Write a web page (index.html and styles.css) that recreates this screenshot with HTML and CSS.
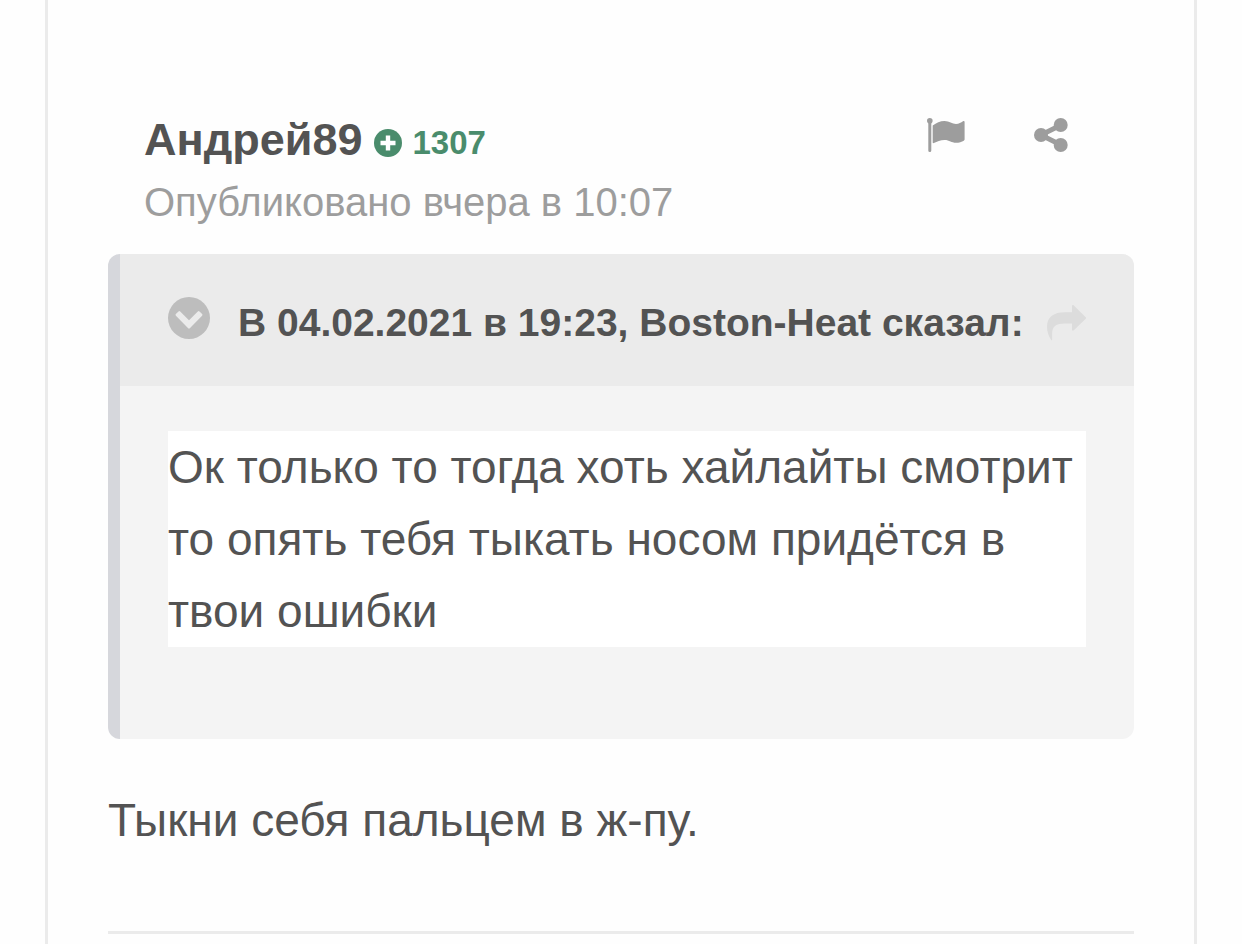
FILE: index.html
```html
<!DOCTYPE html>
<html lang="ru">
<head>
    <meta charset="UTF-8">
    <meta name="viewport" content="width=device-width, initial-scale=1.0">
    <title>Андрей89</title>
    <link rel="stylesheet" href="styles.css">
</head>
<body>
    <article class="post">
        <header class="post-header">
            <div class="post-author">
                <h3 class="author-line">
                    <a class="author-name" href="#">Андрей89</a>
                    <span class="reputation">
                        <svg class="icon-plus" viewBox="0 0 28 28" aria-hidden="true">
                            <circle cx="14" cy="14" r="14" fill="currentColor"/>
                            <path d="M14 6.500v15M6.500 14h15" stroke="#fff" stroke-width="4.400"/>
                        </svg>
                        1307
                    </span>
                </h3>
                <a class="post-date" href="#">Опубликовано вчера в 10:07</a>
            </div>
            <div class="post-tools">
                <button type="button" class="tool" aria-label="Пожаловаться">
                    <svg class="icon-flag" viewBox="0 0 38 34" aria-hidden="true">
                        <circle cx="2.800" cy="2.800" r="2.800"/>
                        <path d="M1.300 3h3v29.500a1.500 1.500 0 0 1-3 0z"/>
                        <path d="M5.700 7.500C9.500 5 13 3 17.500 3c5 0 7.500 3 11.500 3 3 0 5-1.600 7-2.700.900-.500 1.600-.200 1.600.700V21.300c0 .700-.200 1-.800 1.400-2 1.100-4.800 2.100-7.800 2.100-4.500 0-6.500-2.800-11.500-2.800-4 0-7.500 1.600-10.600 3.100-.700.400-1.200 0-1.200-.700z"/>
                    </svg>
                </button>
                <button type="button" class="tool" aria-label="Поделиться">
                    <svg class="icon-share" viewBox="0 0 34 34" aria-hidden="true">
                        <path d="M27 7L7 17l20 10" fill="none" stroke="currentColor" stroke-width="5"/>
                        <circle cx="7" cy="17" r="7"/>
                        <circle cx="26.700" cy="7" r="7"/>
                        <circle cx="26.700" cy="27" r="7"/>
                    </svg>
                </button>
            </div>
        </header>

        <blockquote class="quote">
            <div class="quote-header">
                <button type="button" class="quote-toggle" aria-label="Свернуть цитату">
                    <svg class="icon-toggle" viewBox="0 0 42 42" aria-hidden="true">
                        <circle cx="21" cy="21" r="21" fill="#bdbdbd"/>
                        <path d="M7.900 18.700a1.200 1.200 0 0 1 0-1.700l2.600-2.600a1.200 1.200 0 0 1 1.700 0L21 23.200l8.800-8.800a1.200 1.200 0 0 1 1.700 0l2.600 2.600a1.200 1.200 0 0 1 0 1.700L21.800 31.300a1.200 1.200 0 0 1-1.600 0z" fill="#ebebeb"/>
                    </svg>
                </button>
                <cite class="quote-title">В 04.02.2021 в 19:23, Boston-Heat сказал:</cite>
                <a class="quote-link" href="#" aria-label="Перейти к сообщению">
                    <svg class="icon-arrow" viewBox="0 0 39 36" aria-hidden="true">
                        <path d="M25 1.200c0-1.200 1-1.500 1.800-.700L38.500 12c.700.600.700 1.300 0 1.900L26.800 25.300c-.800.800-1.800.500-1.800-.700V18.500h-7C9 18.500 5.500 21.500 5.200 27.500c-.100 2.500-.100 4.500 0 7 0 1-.700 1.200-1.200.300C1.500 31 0 26 0 22 0 11.500 7 7.300 18 7.300h7z"/>
                    </svg>
                </a>
            </div>
            <div class="quote-body">
                <p class="quote-text">Ок только то тогда хоть хайлайты смотрит то опять тебя тыкать носом придётся в твои ошибки</p>
            </div>
        </blockquote>

        <p class="post-text">Тыкни себя пальцем в ж-пу.</p>

        <hr class="divider">
    </article>
</body>
</html>
```
FILE: styles.css
```css
* {
    margin: 0;
    padding: 0;
    box-sizing: border-box;
}

body {
    font-family: "Liberation Sans", Arial, sans-serif;
    font-size: 46px;
    line-height: 72px;
    color: #535353;
    background-color: #fefefe;
}

a {
    color: inherit;
    text-decoration: none;
}

button {
    display: flex;
    border: none;
    background: none;
    color: inherit;
    cursor: pointer;
}

svg {
    display: block;
}

/* Post */
.post {
    min-height: 100vh;
    margin: 0 45px;
    padding: 108px 60px 0;
    border: solid #ebebeb;
    border-width: 0 3px;
}

.post-header {
    display: flex;
    justify-content: space-between;
    padding: 0 66px 0 36px;
    margin-bottom: 20px;
}

.author-line {
    display: flex;
    align-items: center;
    gap: 12px;
    font-size: 45px;
    line-height: 63px;
}

.reputation {
    display: flex;
    align-items: center;
    gap: 10px;
    padding-top: 7px;
    font-size: 33px;
    line-height: 42px;
    color: #4a8c6c;
}

.icon-plus {
    width: 28px;
    height: 28px;
}

.post-date {
    display: block;
    font-size: 40px;
    line-height: 63px;
    color: #9d9d9d;
}

.post-tools {
    display: flex;
    align-items: flex-start;
    gap: 69px;
    padding-top: 10px;
    color: #9d9d9d;
}

.icon-flag {
    width: 38px;
    height: 34px;
    fill: currentColor;
}

.icon-share {
    width: 34px;
    height: 34px;
    fill: currentColor;
}

/* Quote */
.quote {
    border-left: 12px solid #d6d7dc;
    border-radius: 12px;
    background-color: #f4f4f4;
    overflow: hidden;
}

.quote-header {
    display: flex;
    align-items: center;
    padding: 39px 48px 33px;
    background-color: #ebebeb;
    line-height: 60px;
}

.quote-toggle {
    margin: 0 28px 10px 0;
}

.icon-toggle {
    width: 42px;
    height: 42px;
}

.quote-title {
    flex: 1;
    font-size: 39px;
    font-style: normal;
    font-weight: bold;
    white-space: nowrap;
}

.icon-arrow {
    width: 39px;
    height: 36px;
    fill: #dcdcdc;
}

.quote-body {
    padding: 45px 48px 92px;
}

.quote-text {
    background-color: #fff;
}

.post-text {
    margin: 45px 0 75px;
}

.divider {
    border: none;
    border-top: 3px solid #ebebeb;
}
```
